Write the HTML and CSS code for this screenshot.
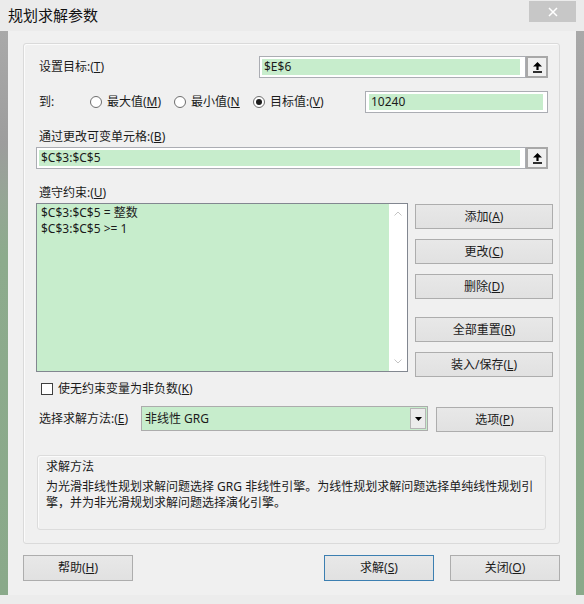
FILE: index.html
```html
<!DOCTYPE html>
<html lang="zh-CN">
<head>
<meta charset="utf-8">
<title>规划求解参数</title>
<link rel="stylesheet" href="styles.css">
</head>
<body>
<div class="window">
  <div class="titlebar">
    <span class="title">规划求解参数</span>
    <div class="close">
      <svg width="10" height="10" viewBox="0 0 10 10"><path d="M1 1 L9 9 M9 1 L1 9" stroke="#fff" stroke-width="1.5"/></svg>
    </div>
  </div>
  <div class="frame">
    <div class="strip"></div>
    <div class="client">
      <div class="panel">
        <div class="row row-target">
          <span class="label">设置目标:(<u>T</u>)</span>
          <div class="refbox target-box">
            <div class="field-wrap"><div class="field">$E$6</div></div>
            <div class="ref-btn">
              <svg width="9" height="11" viewBox="0 0 9 11"><path d="M4.5 0 L9 4.5 H5.6 V8 H3.4 V4.5 H0 Z" fill="#000"/><rect x="0" y="9.2" width="9" height="1.6" fill="#000"/></svg>
            </div>
          </div>
        </div>

        <div class="row row-to">
          <span class="label to-label">到:</span>
          <div class="radio r1"><span class="dot"></span><span>最大值(<u>M</u>)</span></div>
          <div class="radio r2"><span class="dot"></span><span>最小值(<u>N</u></span></div>
          <div class="radio r3"><span class="dot on"></span><span>目标值:(<u>V</u>)</span></div>
          <div class="valuebox"><div class="field">10240</div></div>
        </div>

        <div class="label block-label">通过更改可变单元格:(<u>B</u>)</div>
        <div class="refbox wide-box">
          <div class="field-wrap"><div class="field">$C$3:$C$5</div></div>
          <div class="ref-btn">
            <svg width="9" height="11" viewBox="0 0 9 11"><path d="M4.5 0 L9 4.5 H5.6 V8 H3.4 V4.5 H0 Z" fill="#000"/><rect x="0" y="9.2" width="9" height="1.6" fill="#000"/></svg>
          </div>
        </div>

        <div class="label block-label">遵守约束:(<u>U</u>)</div>
        <div class="constraints">
          <div class="list">
            <div class="list-items">
              <div>$C$3:$C$5 = 整数</div>
              <div>$C$3:$C$5 &gt;= 1</div>
            </div>
            <div class="scroll">
              <svg width="8" height="5" viewBox="0 0 8 5"><path d="M0.5 4.5 L4 1 L7.5 4.5" fill="none" stroke="#c4c4c4" stroke-width="1"/></svg>
              <svg width="8" height="5" viewBox="0 0 8 5"><path d="M0.5 0.5 L4 4 L7.5 0.5" fill="none" stroke="#c4c4c4" stroke-width="1"/></svg>
            </div>
          </div>
          <div class="side-buttons">
            <div class="btn">添加(<u>A</u>)</div>
            <div class="btn">更改(<u>C</u>)</div>
            <div class="btn gap-after">删除(<u>D</u>)</div>
            <div class="btn">全部重置(<u>R</u>)</div>
            <div class="btn">装入/保存(<u>L</u>)</div>
          </div>
        </div>

        <div class="check"><span class="box"></span><span>使无约束变量为非负数(<u>K</u>)</span></div>

        <div class="row row-method">
          <span class="label method-label">选择求解方法:(<u>E</u>)</span>
          <div class="combo">
            <div class="combo-text">非线性 GRG</div>
            <div class="drop"><svg width="7" height="4" viewBox="0 0 7 4"><path d="M0 0 H7 L3.5 4 Z" fill="#000"/></svg></div>
          </div>
          <div class="btn options">选项(<u>P</u>)</div>
        </div>

        <div class="desc">
          <div class="desc-title">求解方法</div>
          <div class="desc-text">为光滑非线性规划求解问题选择 GRG 非线性引擎。为线性规划求解问题选择单纯线性规划引<br>擎，并为非光滑规划求解问题选择演化引擎。</div>
        </div>
      </div>

      <div class="footer">
        <div class="btn foot">帮助(<u>H</u>)</div>
        <div class="spacer"></div>
        <div class="btn foot primary">求解(<u>S</u>)</div>
        <div class="btn foot close-btn">关闭(<u>O</u>)</div>
      </div>
    </div>
    <div class="strip"></div>
  </div>
  <div class="bottom"></div>
</div>
</body>
</html>
```

FILE: styles.css
```css
* { box-sizing: border-box; }
html, body { margin: 0; padding: 0; }
body {
  width: 584px;
  height: 604px;
  overflow: hidden;
  font-family: "Noto Sans", "Noto Sans CJK SC", sans-serif;
  font-size: 12px;
  line-height: 16px;
  color: #1b1b1b;
  background: #ececec;
}
u { text-decoration: underline; text-underline-offset: 1px; }

.window {
  width: 584px;
  height: 604px;
  display: flex;
  flex-direction: column;
  background: #ececec;
}

.titlebar {
  height: 31px;
  flex: none;
  position: relative;
  display: flex;
  align-items: center;
  padding-left: 8px;
  background: #ebebeb;
}
.title {
  font-family: "Noto Sans CJK SC", sans-serif;
  font-size: 15px;
  line-height: 20px;
  color: #111;
  margin-top: -1px;
}
.close {
  position: absolute;
  top: 1px;
  right: 8px;
  width: 47px;
  height: 21px;
  background: #c7c7c7;
  display: flex;
  align-items: center;
  justify-content: center;
}

.frame {
  height: 564px;
  flex: none;
  display: flex;
}
.strip {
  width: 8px;
  flex: none;
  background: linear-gradient(to bottom, #a9a9a9 0%, #9d9d9d 20%, #95a695 30%, #8dab8d 40%, #8aa98a 100%);
}
.client {
  flex: 1;
  background: #f0f0f0;
  padding: 12px 16px 0 15px;
  display: flex;
  flex-direction: column;
}

.panel {
  height: 501px;
  flex: none;
  border: 1px solid #dadada;
  border-radius: 3px;
  box-shadow: inset 1px 1px 0 #fbfbfb;
  padding: 12px 6px 0 12px;
  display: flex;
  flex-direction: column;
}

.row { display: flex; align-items: center; }
.label { margin-left: 3px; white-space: nowrap; }

.row-target { height: 22px; }
.refbox { display: flex; height: 22px; margin-right: 5px; }
.target-box { margin-left: auto; width: 289px; }
.wide-box { width: 512px; margin-top: 2px; }
.field-wrap {
  flex: 1;
  border: 1px solid #abadb3;
  background: #fff;
  padding: 2px 5px 2px 2px;
  display: flex;
}
.field {
  flex: 1;
  background: #c7edcc;
  padding-left: 2px;
  line-height: 16px;
  white-space: nowrap;
}
.ref-btn {
  width: 22px;
  flex: none;
  border: 2px solid #a8a8a8;
  background: #f0f0f0;
  display: flex;
  align-items: center;
  justify-content: center;
}

.row-to { height: 22px; margin-top: 13px; }
.to-label { width: 51px; flex: none; }
.radio { display: flex; align-items: center; gap: 5px; flex: none; white-space: nowrap; }
.r1 { width: 84px; }
.r2 { width: 79px; }
.dot {
  width: 12px;
  height: 12px;
  border: 1px solid #6e6e6e;
  border-radius: 50%;
  background: #fff;
  display: flex;
  align-items: center;
  justify-content: center;
  flex: none;
}
.dot.on::after {
  content: "";
  width: 6px;
  height: 6px;
  border-radius: 50%;
  background: #1c1c1c;
}
.valuebox {
  margin-left: auto;
  margin-right: 5px;
  width: 183px;
  height: 22px;
  border: 1px solid #abadb3;
  background: #fff;
  padding: 2px 4px 2px 3px;
  display: flex;
}

.block-label { margin-top: 16px; height: 16px; }

.constraints {
  display: flex;
  gap: 7px;
  margin-top: 2px;
  align-items: flex-start;
}
.list {
  width: 372px;
  height: 169px;
  flex: none;
  border: 1px solid #828790;
  display: flex;
}
.list-items {
  flex: 1;
  background: #c7edcc;
  padding: 1px 4px;
  white-space: nowrap;
}
.scroll {
  width: 18px;
  flex: none;
  background: #fff;
  display: flex;
  flex-direction: column;
  align-items: center;
  justify-content: space-between;
  padding: 7px 0 7px 0;
}
.side-buttons {
  width: 138px;
  flex: none;
  margin-top: 1px;
  display: flex;
  flex-direction: column;
  gap: 10px;
}
.btn {
  height: 25px;
  border: 1px solid #adadad;
  background: linear-gradient(#e8e8e8, #e1e1e1);
  display: flex;
  align-items: center;
  justify-content: center;
  white-space: nowrap;
  color: #1b1b1b;
}
.gap-after { margin-bottom: 8px; }

.check {
  display: flex;
  align-items: center;
  gap: 5px;
  height: 16px;
  margin-top: 4px;
  margin-left: 5px;
}
.box {
  width: 12px;
  height: 12px;
  border: 1px solid #3f3f3f;
  background: #fff;
  flex: none;
}

.row-method { margin-top: 9px; align-items: flex-start; }
.method-label { width: 102px; flex: none; line-height: 25px; }
.combo {
  width: 287px;
  height: 25px;
  flex: none;
  border: 1px solid #acacac;
  background: #c7edcc;
  display: flex;
}
.combo-text { flex: 1; padding-left: 3px; line-height: 23px; white-space: nowrap; }
.drop {
  width: 16px;
  flex: none;
  margin: 1px;
  border: 1px solid #b5b5b5;
  background: #ececec;
  display: flex;
  align-items: center;
  justify-content: center;
}
.options { width: 117px; margin-left: 8px; margin-top: 1px; }

.desc {
  width: 509px;
  height: 75px;
  margin-top: 23px;
  margin-left: 1px;
  border: 1px solid #dcdcdc;
  border-radius: 3px;
  box-shadow: inset 1px 1px 0 #fbfbfb;
  padding: 3px 8px;
}
.desc-text { margin-top: 4px; white-space: nowrap; }

.footer {
  display: flex;
  margin-top: 11px;
}
.foot { width: 110px; height: 26px; }
.spacer { flex: 1; }
.primary { border-color: #3c7fb1; }
.close-btn { margin-left: 16px; }

.bottom { height: 9px; flex: none; background: #ececec; }
```
